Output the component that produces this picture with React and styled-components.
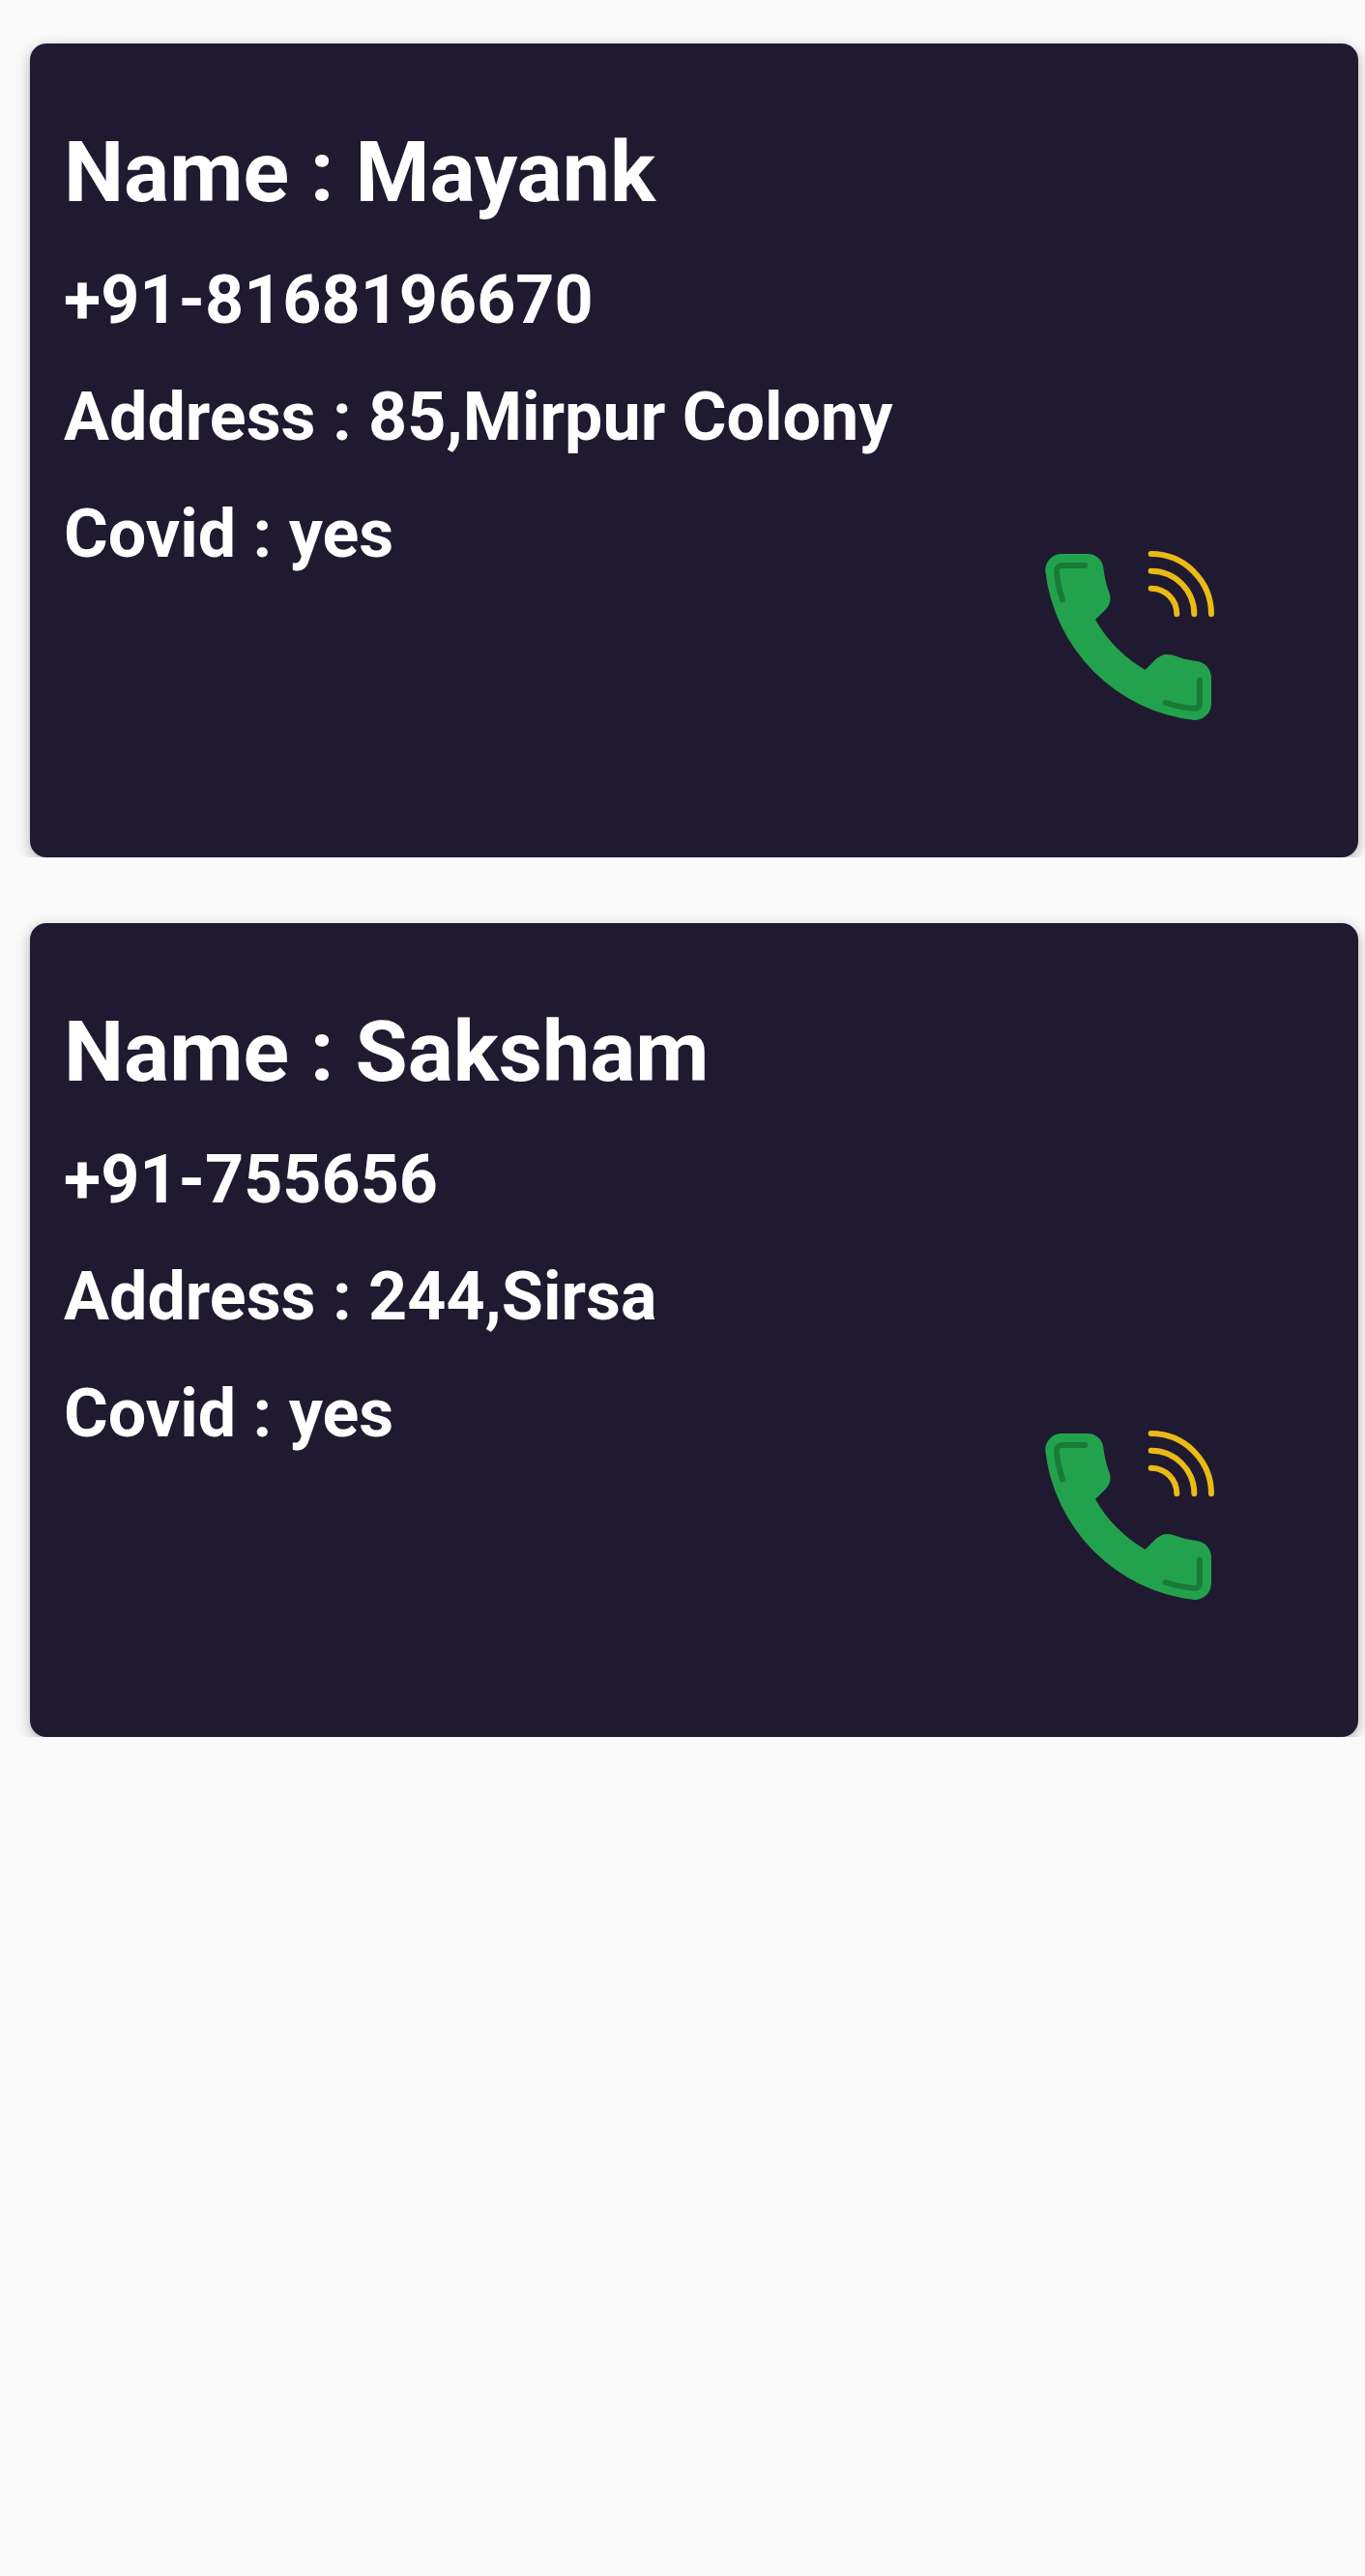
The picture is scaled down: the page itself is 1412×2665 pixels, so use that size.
import React from "react";
import styled, { createGlobalStyle } from "styled-components";

const GlobalStyle = createGlobalStyle`
  * {
    box-sizing: border-box;
  }
  body {
    margin: 0;
    background: #fafafa;
    font-family: Roboto, "Noto Sans", sans-serif;
  }
`;

const List = styled.ul`
  display: flex;
  flex-direction: column;
  gap: 23px;
  margin: 0;
  padding: 0;
  list-style: none;
`;

const Item = styled.li`
  padding: 45px 7px 0 31px;
  overflow: hidden;
`;

const Card = styled.article`
  display: flex;
  justify-content: space-between;
  min-height: 842px;
  padding: 81px 149px 142px 35px;
  border-radius: 17px;
  background: #201a30;
  color: #ffffff;
  box-shadow: 0 4px 14px rgba(0, 0, 0, 0.3);
`;

const Details = styled.div`
  display: flex;
  flex-direction: column;
  gap: 39px;
`;

const Name = styled.h2`
  margin: 0;
  font-size: 88px;
  line-height: 104px;
  font-weight: 700;
`;

const Line = styled.p`
  margin: 0;
  font-size: 70px;
  line-height: 82px;
  font-weight: 700;
`;

const CallButton = styled.button`
  align-self: flex-end;
  flex: none;
  display: block;
  padding: 0;
  border: 0;
  background: none;
  cursor: pointer;
`;

const Icon = styled.svg`
  display: block;
  width: 176px;
  height: 176px;
`;

const contacts = [
  { name: "Mayank", phone: "+91-8168196670", address: "85,Mirpur Colony", covid: "yes" },
  { name: "Saksham", phone: "+91-755656", address: "244,Sirsa", covid: "yes" },
];

function PhoneIcon() {
  return (
    <Icon viewBox="60 57 528 528" fill="none" strokeWidth="18" strokeLinecap="round" aria-hidden="true">
      <path
        fill="#23a24d"
        d="M64 122C63 92 87 69 114 69H194C221 69 242 88 244 112C247 138 252 162 261 186C270 207 266 226 252 241L219 273A424 424 0 0 0 374 429L406 397C420 383 438 377 459 383C483 392 508 399 534 402C560 405 579 428 579 453V534C579 562 556 586 526 585A526 526 0 0 1 64 122Z"
      />
      <g stroke="#1a7a37">
        <path d="M187 105H116C105 105 98 113 99 123C101 152 108 184 117 211" />
        <path d="M543 461V533C543 544 534 550 525 549C496 547 466 541 437 531" />
      </g>
      <g stroke="#ebba16">
        <path d="M392 69A187 187 0 0 1 579 256" />
        <path d="M392 122A134 134 0 0 1 526 256" />
        <path d="M392 176A80 80 0 0 1 472 256" />
      </g>
    </Icon>
  );
}

function ContactCard({ contact }) {
  return (
    <Card>
      <Details>
        <Name>Name : {contact.name}</Name>
        <Line>{contact.phone}</Line>
        <Line>Address : {contact.address}</Line>
        <Line>Covid : {contact.covid}</Line>
      </Details>
      <CallButton type="button" aria-label={`Call ${contact.name}`}>
        <PhoneIcon />
      </CallButton>
    </Card>
  );
}

export default function App() {
  return (
    <>
      <GlobalStyle />
      <main>
        <List>
          {contacts.map((contact) => (
            <Item key={contact.name}>
              <ContactCard contact={contact} />
            </Item>
          ))}
        </List>
      </main>
    </>
  );
}
